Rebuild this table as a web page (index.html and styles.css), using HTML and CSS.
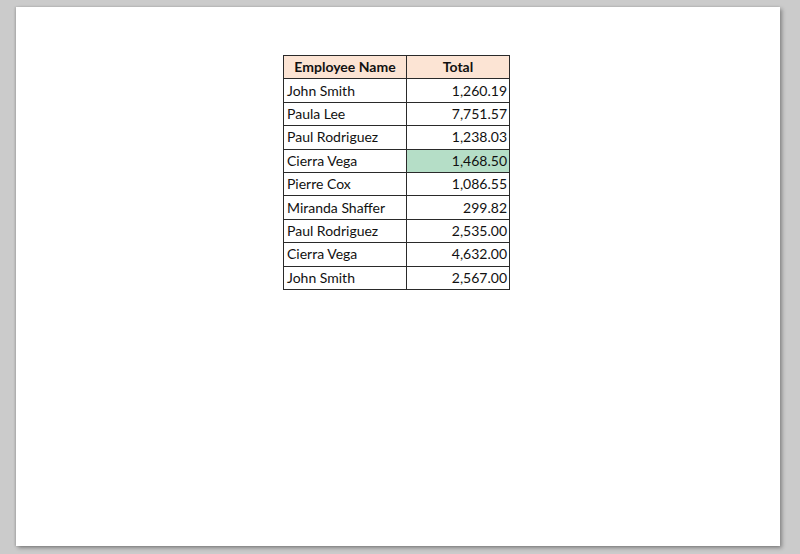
FILE: index.html
```html
<!DOCTYPE html>
<html>
<head>
<meta charset="utf-8">
<link rel="stylesheet" href="styles.css">
</head>
<body>
<div class="page">
  <table class="sheet">
    <thead>
      <tr><th class="name">Employee Name</th><th class="total">Total</th></tr>
    </thead>
    <tbody>
      <tr><td>John Smith</td><td class="num">1,260.19</td></tr>
      <tr><td>Paula Lee</td><td class="num">7,751.57</td></tr>
      <tr><td>Paul Rodriguez</td><td class="num">1,238.03</td></tr>
      <tr><td>Cierra Vega</td><td class="num hl">1,468.50</td></tr>
      <tr><td>Pierre Cox</td><td class="num">1,086.55</td></tr>
      <tr><td>Miranda Shaffer</td><td class="num">299.82</td></tr>
      <tr><td>Paul Rodriguez</td><td class="num">2,535.00</td></tr>
      <tr><td>Cierra Vega</td><td class="num">4,632.00</td></tr>
      <tr><td>John Smith</td><td class="num">2,567.00</td></tr>
    </tbody>
  </table>
</div>
</body>
</html>
```
FILE: styles.css
```css
html, body {
  margin: 0;
  padding: 0;
  height: 100%;
}
body {
  background: #cbcbcb;
  padding: 7px 0 0 16px;
  box-sizing: border-box;
  font-family: Lato, "Open Sans", sans-serif;
}
.page {
  width: 764px;
  height: 539px;
  background: #ffffff;
  box-shadow: 2px 2px 4px rgba(0, 0, 0, 0.35), -1px 0 2px rgba(0,0,0,0.15);
  padding: 48px 0 0 267px;
  box-sizing: border-box;
}
.sheet {
  border-collapse: collapse;
  font-size: 14px;
  color: #111;
}
.sheet th, .sheet td {
  border: 1px solid #2a2a2a;
  height: 23.4px;
  padding: 0 3px;
  box-sizing: border-box;
  line-height: 1;
}
.sheet th {
  background: #fce4d4;
  font-weight: bold;
  text-align: center;
}
.sheet .name { width: 123px; }
.sheet .total { width: 103px; }
.sheet td { text-align: left; }
.sheet td.num { text-align: right; padding-right: 2px; }
.sheet td.hl { background: #b5dec7; }
```
